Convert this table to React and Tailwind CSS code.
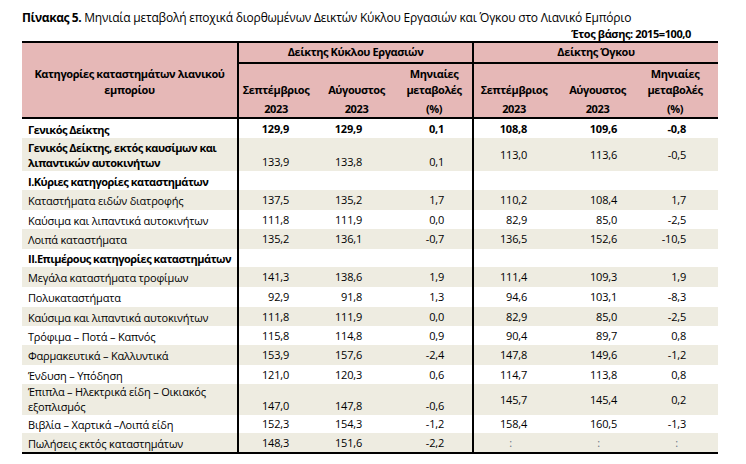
const rows = [
  { label: ["Γενικός Δείκτης"], bold: true, all: true, h: 19, ke: ["129,9", "129,9", "0,1"], og: ["108,8", "109,6", "-0,8"] },
  { label: ["Γενικός Δείκτης, εκτός καυσίμων και", "λιπαντικών αυτοκινήτων"], bold: true, h: 33, ke: ["133,9", "133,8", "0,1"], og: ["113,0", "113,6", "-0,5"] },
  { label: ["I.Κύριες κατηγορίες καταστημάτων"], bold: true, h: 19 },
  { label: ["Καταστήματα ειδών διατροφής"], h: 20, ke: ["137,5", "135,2", "1,7"], og: ["110,2", "108,4", "1,7"] },
  { label: ["Καύσιμα και λιπαντικά αυτοκινήτων"], h: 19, ke: ["111,8", "111,9", "0,0"], og: ["82,9", "85,0", "-2,5"] },
  { label: ["Λοιπά καταστήματα"], h: 20, ke: ["135,2", "136,1", "-0,7"], og: ["136,5", "152,6", "-10,5"] },
  { label: ["II.Επιμέρους κατηγορίες καταστημάτων"], bold: true, h: 18 },
  { label: ["Μεγάλα καταστήματα τροφίμων"], h: 20, ke: ["141,3", "138,6", "1,9"], og: ["111,4", "109,3", "1,9"] },
  { label: ["Πολυκαταστήματα"], h: 20, ke: ["92,9", "91,8", "1,3"], og: ["94,6", "103,1", "-8,3"] },
  { label: ["Καύσιμα και λιπαντικά αυτοκινήτων"], h: 19, ke: ["111,8", "111,9", "0,0"], og: ["82,9", "85,0", "-2,5"] },
  { label: ["Τρόφιμα – Ποτά – Καπνός"], h: 19, ke: ["115,8", "114,8", "0,9"], og: ["90,4", "89,7", "0,8"] },
  { label: ["Φαρμακευτικά – Καλλυντικά"], h: 20, ke: ["153,9", "157,6", "-2,4"], og: ["147,8", "149,6", "-1,2"] },
  { label: ["Ένδυση – Υπόδηση"], h: 19, ke: ["121,0", "120,3", "0,6"], og: ["114,7", "113,8", "0,8"] },
  { label: ["Έπιπλα – Ηλεκτρικά είδη – Οικιακός", "εξοπλισμός"], h: 31, ke: ["147,0", "147,8", "-0,6"], og: ["145,7", "145,4", "0,2"] },
  { label: ["Βιβλία – Χαρτικά –Λοιπά είδη"], h: 18, ke: ["152,3", "154,3", "-1,2"], og: ["158,4", "160,5", "-1,3"] },
  { label: ["Πωλήσεις εκτός καταστημάτων"], h: 19, ke: ["148,3", "151,6", "-2,2"], og: [":", ":", ":"] },
]

function Row({ row, striped }) {
  const two = row.label.length > 1
  const num = row.all ? "font-bold" : ""
  const keAlign = two ? "items-end pb-[1px]" : "items-center pt-[1px]"
  const ogAlign = "items-center pt-[1px]"
  const dash = row.og && row.og[0] === ":"
  return (
    <div className={`flex ${striped ? "bg-[#eeece1]" : "bg-white"}`} style={{ height: row.h }}>
      <div className={`w-[215px] flex flex-col pl-[6px] leading-[15px] ${two ? "justify-end pb-[1px]" : "justify-center pt-[1px]"} ${row.bold ? "font-bold tracking-[-0.5px]" : ""}`}>
        {row.label.map((l) => (
          <div key={l} className="whitespace-nowrap">{l}</div>
        ))}
      </div>
      <div className={`w-[76px] border-l-2 border-black flex justify-end pr-[24px] ${keAlign} ${num}`}>{row.ke?.[0]}</div>
      <div className={`w-[87px] flex justify-end pr-[38px] ${keAlign} ${num}`}>{row.ke?.[1]}</div>
      <div className={`w-[72px] flex justify-end pr-[28px] ${keAlign} ${num}`}>{row.ke?.[2]}</div>
      <div className={`w-[82px] border-l-2 border-black flex justify-end ${dash ? "pr-[42px] text-gray-500" : "pr-[27px]"} ${ogAlign} ${num}`}>{row.og?.[0]}</div>
      <div className={`w-[87px] flex justify-end ${dash ? "pr-[41px] text-gray-500" : "pr-[24px]"} ${ogAlign} ${num}`}>{row.og?.[1]}</div>
      <div className={`w-[77px] flex justify-end ${dash ? "pr-[40px] text-gray-500" : "pr-[32px]"} ${ogAlign} ${num}`}>{row.og?.[2]}</div>
    </div>
  )
}

function SubHead({ w, lines, pad = "", border = false }) {
  return (
    <div className={`flex flex-col justify-end items-center ${w} ${pad} ${border ? "border-l-2 border-black" : ""}`}>
      {lines.map((l, i) => (
        <div key={i} className={`h-[16px] leading-[16px] whitespace-nowrap ${i === lines.length - 1 ? "mt-[3px]" : ""}`}>
          {l}
        </div>
      ))}
    </div>
  )
}

function Group({ title, w, children }) {
  return (
    <div className={`${w} border-l-2 border-black flex flex-col`}>
      <div className="h-[21px] border-b-2 border-black flex items-center justify-center">{title}</div>
      <div className="flex flex-1">{children}</div>
    </div>
  )
}

export default function App() {
  return (
    <div className="w-[746px] h-[464px] bg-white text-black font-['Open_Sans','Noto_Sans',sans-serif] text-[11px] tracking-[-0.2px]">
      <div className="pl-[22px] pt-[10px] h-[26px] leading-[16px] text-[12px] whitespace-nowrap">
        <span className="font-bold tracking-[-0.4px]">Πίνακας 5.</span> Μηνιαία μεταβολή εποχικά διορθωμένων Δεικτών Κύκλου Εργασιών και Όγκου στο Λιανικό Εμπόριο
      </div>
      <div className="w-[746px] pr-[55px] h-[15px] leading-[15px] text-right font-bold tracking-[-0.4px]">Έτος βάσης: 2015=100,0</div>

      <div className="ml-[22px] w-[696px]">
        <div className="flex h-[78px] bg-[#e6b8b7] border-y-2 border-black font-bold tracking-[-0.4px]">
          <div className="w-[215px] flex flex-col items-center pt-[23px] leading-[16px]">
            <div>Κατηγορίες καταστημάτων λιανικού</div>
            <div>εμπορίου</div>
          </div>
          <Group title="Δείκτης Κύκλου Εργασιών" w="w-[235px]">
            <SubHead w="w-[74px]" lines={["Σεπτέμβριος", "2023"]} />
            <SubHead w="w-[87px]" lines={["Αύγουστος", "2023"]} />
            <SubHead w="w-[72px]" pad="pr-[4px]" lines={["Μηνιαίες", "μεταβολές", "(%)"]} />
          </Group>
          <Group title="Δείκτης Όγκου" w="w-[246px]">
            <SubHead w="w-[80px]" lines={["Σεπτέμβριος", "2023"]} />
            <SubHead w="w-[87px]" lines={["Αύγουστος", "2023"]} />
            <SubHead w="w-[77px]" pad="pr-[9px]" lines={["Μηνιαίες", "μεταβολές", "(%)"]} />
          </Group>
        </div>
        <div className="border-b-2 border-black">
          {rows.map((r, i) => (
            <Row key={i} row={r} striped={i % 2 === 1} />
          ))}
        </div>
      </div>
    </div>
  )
}
